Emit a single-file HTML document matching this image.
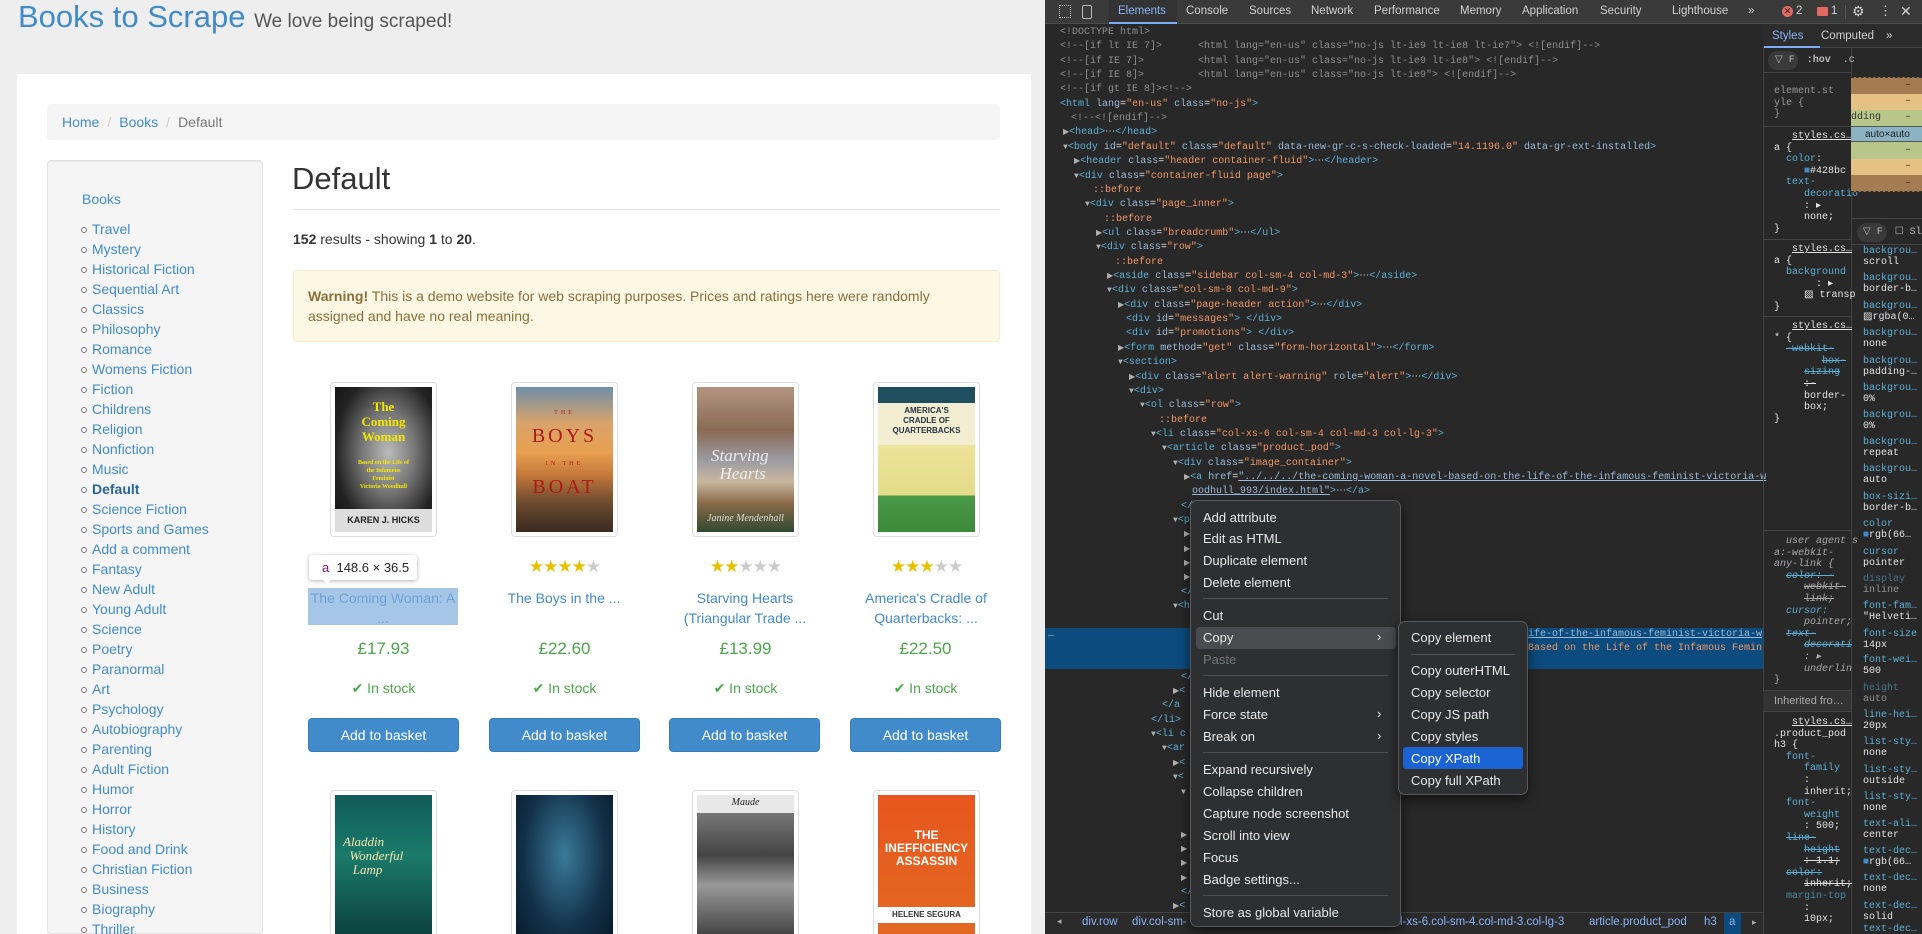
<!DOCTYPE html>
<html style="width:1922px;height:934px;overflow:hidden"><head><meta charset="utf-8">
<style>
*{box-sizing:border-box;margin:0;padding:0}
body{width:1922px;height:934px;overflow:hidden;position:relative;background:#eee;font-family:"Liberation Sans",Arial,sans-serif;font-size:14px;color:#333}
.a{position:absolute;white-space:nowrap}
a{color:#428bca;text-decoration:none}
#page{position:absolute;left:17px;top:74px;width:1014px;height:860px;background:#fff}
.bc{position:absolute;left:47px;top:104px;width:953px;height:36px;background:#f5f5f5;border-radius:4px}
.side{position:absolute;left:47px;top:160px;width:216px;height:774px;background:#f5f5f5;border:1px solid #e3e3e3;border-radius:4px;box-shadow:inset 0 1px 1px rgba(0,0,0,.05)}
.li{position:absolute;left:92px;color:#428bca;line-height:20px}
.li:before{content:"";position:absolute;left:-11px;top:8px;width:4px;height:4px;border:1px solid #777;border-radius:50%}
.imgbox{position:absolute;width:107px;height:155px;border:1px solid #ddd;border-radius:4px;background:#fff;padding:4px}
.cov{width:97px;height:145px;overflow:hidden;position:relative}
.stars{position:absolute;font-size:17px;letter-spacing:-1px;color:#e6c100;width:181px;text-align:center}
.stars i{font-style:normal;color:#ccc}
.ttl{position:absolute;width:150px;text-align:center;color:#428bca;line-height:20px;font-size:14px}
.price{position:absolute;width:151px;text-align:center;color:#4ca64c;font-size:17px}
.stock{position:absolute;width:151px;text-align:center;color:#4ca64c}
.btn{position:absolute;width:151px;height:34px;background:#428bca;border:1px solid #357ebd;border-radius:4px;color:#fff;text-align:center;line-height:32px}
#dt{position:absolute;left:1045px;top:0;width:877px;height:934px;background:#282828;font-family:"Liberation Sans",Arial,sans-serif;color:#e3e3e3;overflow:hidden}
.tabs{position:absolute;left:0;top:0;width:877px;height:24px;background:#3a3a3a;border-bottom:1px solid #4a4a4a}
.tab{position:absolute;top:5px;font-size:11.5px;color:#d0d0d0}
.dl{position:absolute;font-family:"Liberation Mono",monospace;font-size:10px;color:#e3e3e3;white-space:pre;line-height:12px}
.t{color:#5db0d7}.n{color:#9bbbdc}.v{color:#f29766}.c{color:#8f8f8f}.o{color:#f29766}
.tri{color:#b0b0b0;font-size:8px}
.menu{position:absolute;background:#2e2f31;border:1px solid #5a5a5a;border-radius:7px;box-shadow:0 4px 12px rgba(0,0,0,.6)}
.mi{position:absolute;left:12px;font-size:13px;color:#e8e8e8;line-height:18px}
.sep{position:absolute;left:12px;right:12px;height:1px;background:#4f4f4f}
.sty{position:absolute;font-family:"Liberation Mono",monospace;font-size:10px;color:#e3e3e3;white-space:pre;line-height:11.6px}
.pn{color:#5db0d7}
.cp{position:absolute;left:1863px;font-family:"Liberation Mono",monospace;font-size:10px;line-height:11px;white-space:pre;color:#e3e3e3}
</style></head><body>

<div class="a" style="left:18px;top:-1px;font-size:31px;color:#428bca;">Books to Scrape <span style="font-size:19px;color:#555">We love being scraped!</span></div>
<div id="page"></div>
<div class="bc"></div>
<div class="a" style="left:62px;top:114px;"><a>Home</a><span style="color:#ccc;padding:0 8px">/</span><a>Books</a><span style="color:#ccc;padding:0 8px">/</span><span style="color:#777">Default</span></div>

<div class="side"></div>
<div class="a" style="left:82px;top:191px;color:#428bca">Books</div>
<div class="li" style="top:219px">Travel</div>
<div class="li" style="top:239px">Mystery</div>
<div class="li" style="top:259px">Historical Fiction</div>
<div class="li" style="top:279px">Sequential Art</div>
<div class="li" style="top:299px">Classics</div>
<div class="li" style="top:319px">Philosophy</div>
<div class="li" style="top:339px">Romance</div>
<div class="li" style="top:359px">Womens Fiction</div>
<div class="li" style="top:379px">Fiction</div>
<div class="li" style="top:399px">Childrens</div>
<div class="li" style="top:419px">Religion</div>
<div class="li" style="top:439px">Nonfiction</div>
<div class="li" style="top:459px">Music</div>
<div class="li" style="top:479px;font-weight:bold;color:#2a6496">Default</div>
<div class="li" style="top:499px">Science Fiction</div>
<div class="li" style="top:519px">Sports and Games</div>
<div class="li" style="top:539px">Add a comment</div>
<div class="li" style="top:559px">Fantasy</div>
<div class="li" style="top:579px">New Adult</div>
<div class="li" style="top:599px">Young Adult</div>
<div class="li" style="top:619px">Science</div>
<div class="li" style="top:639px">Poetry</div>
<div class="li" style="top:659px">Paranormal</div>
<div class="li" style="top:679px">Art</div>
<div class="li" style="top:699px">Psychology</div>
<div class="li" style="top:719px">Autobiography</div>
<div class="li" style="top:739px">Parenting</div>
<div class="li" style="top:759px">Adult Fiction</div>
<div class="li" style="top:779px">Humor</div>
<div class="li" style="top:799px">Horror</div>
<div class="li" style="top:819px">History</div>
<div class="li" style="top:839px">Food and Drink</div>
<div class="li" style="top:859px">Christian Fiction</div>
<div class="li" style="top:879px">Business</div>
<div class="li" style="top:899px">Biography</div>
<div class="li" style="top:919px">Thriller</div>

<div class="a" style="left:292px;top:161px;font-size:31px;color:#333">Default</div>
<div class="a" style="left:293px;top:209px;width:707px;height:1px;background:#e5e5e5"></div>
<div class="a" style="left:293px;top:231px"><b>152</b> results - showing <b>1</b> to <b>20</b>.</div>
<div class="a" style="left:293px;top:270px;width:707px;height:72px;background:#fcf8e3;border:1px solid #faebcc;border-radius:4px"></div>
<div class="a" style="left:308px;top:286px;color:#8a6d3b;line-height:20px;white-space:normal;width:680px"><b>Warning!</b> This is a demo website for web scraping purposes. Prices and ratings here were randomly assigned and have no real meaning.</div>

<div class="imgbox" style="left:330px;top:382px"><div class="cov" style="background:radial-gradient(ellipse at 55% 45%,#bbb 0%,#777 35%,#222 70%,#111 100%)">
<div class="a" style="left:0;width:97px;top:12px;text-align:center;color:#f2e600;font:bold 13px 'Liberation Serif',serif;line-height:15px">The<br>Coming<br>Woman</div>
<div class="a" style="left:0;width:97px;top:72px;text-align:center;color:#f2e600;font:bold 6px 'Liberation Serif',serif;line-height:8px">Based on the Life of<br>the Infamous<br>Feminist<br>Victoria Woodhull</div>
<div class="a" style="left:0;width:97px;top:122px;height:23px;background:#ddd;text-align:center;font:bold 9px 'Liberation Sans';line-height:23px;color:#222">KAREN J. HICKS</div></div></div>
<div class="imgbox" style="left:511px;top:382px"><div class="cov" style="background:linear-gradient(#6e8fa8 0%,#d9a36a 25%,#e8a050 45%,#c77a3a 60%,#6b4a2e 80%,#3a2a20 100%)">
<div class="a" style="left:0;width:97px;top:10px;text-align:center;color:#b01818;font:20px 'Liberation Serif',serif;letter-spacing:3px;line-height:23px"><span style="font-size:6px">THE</span><br>BOYS<br><span style="font-size:6px">IN THE</span><br>BOAT</div></div></div>
<div class="imgbox" style="left:692px;top:382px"><div class="cov" style="background:linear-gradient(#b29480 0%,#8a6a55 30%,#9a9aa0 50%,#c9b7a0 65%,#8b6a4a 80%,#2f4a2f 100%)">
<div class="a" style="left:14px;top:60px;color:#eee;font:italic 17px 'Liberation Serif',serif;line-height:18px">Starving<br>&nbsp;&nbsp;Hearts</div>
<div class="a" style="left:10px;top:126px;color:#ddd;font:italic 10px 'Liberation Serif',serif">Janine Mendenhall</div></div></div>
<div class="imgbox" style="left:873px;top:382px"><div class="cov" style="background:linear-gradient(#1f4e5e 0%,#1f4e5e 11%,#f3eed2 11%,#f3eed2 40%,#ede39a 40%,#e3dc88 75%,#4a9a4a 75%,#3a8a3a 100%)">
<div class="a" style="left:0;width:97px;top:19px;text-align:center;color:#234;font:bold 8px 'Liberation Sans';line-height:10px">AMERICA'S<br>CRADLE OF<br>QUARTERBACKS</div></div></div>

<div class="stars" style="left:292px;top:557px">★<i>★★★★</i></div>
<div class="stars" style="left:474px;top:557px">★★★★<i>★</i></div>
<div class="stars" style="left:655px;top:557px">★★<i>★★★</i></div>
<div class="stars" style="left:836px;top:557px">★★★<i>★★</i></div>

<div class="a" style="left:308px;top:588px;width:150px;height:37px;background:#a6c6e8"></div>
<div class="ttl" style="left:308px;top:588px;color:#6fa0d4">The Coming Woman: A<br>...</div>
<div class="ttl" style="left:489px;top:588px">The Boys in the ...</div>
<div class="ttl" style="left:670px;top:588px">Starving Hearts<br>(Triangular Trade ...</div>
<div class="ttl" style="left:851px;top:588px">America's Cradle of<br>Quarterbacks: ...</div>

<div class="a" style="left:309px;top:555px;width:108px;height:25px;background:#fff;border-radius:3px;box-shadow:0 1px 4px rgba(0,0,0,.3)"></div>
<div class="a" style="left:321px;top:578px;width:0;height:0;border-left:6px solid transparent;border-right:6px solid transparent;border-top:6px solid #fff"></div>
<div class="a" style="left:322px;top:560px;font-size:13px"><span style="color:#881280">a</span>&nbsp;&nbsp;<span style="color:#222">148.6 × 36.5</span></div>

<div class="price" style="left:308px;top:639px">£17.93</div>
<div class="price" style="left:489px;top:639px">£22.60</div>
<div class="price" style="left:670px;top:639px">£13.99</div>
<div class="price" style="left:850px;top:639px">£22.50</div>
<div class="stock" style="left:308px;top:680px">✔ In stock</div>
<div class="stock" style="left:489px;top:680px">✔ In stock</div>
<div class="stock" style="left:670px;top:680px">✔ In stock</div>
<div class="stock" style="left:850px;top:680px">✔ In stock</div>
<div class="btn" style="left:308px;top:718px">Add to basket</div>
<div class="btn" style="left:489px;top:718px">Add to basket</div>
<div class="btn" style="left:669px;top:718px">Add to basket</div>
<div class="btn" style="left:850px;top:718px">Add to basket</div>

<div class="imgbox" style="left:330px;top:790px;height:150px"><div class="cov" style="height:150px;background:linear-gradient(#0f5a5a,#1b7a6a 40%,#0a3a3a)">
<div class="a" style="left:8px;top:40px;color:#f3e6b0;font:italic 13px 'Liberation Serif',serif;line-height:14px">Aladdin<br>&nbsp;&nbsp;Wonderful<br>&nbsp;&nbsp;&nbsp;Lamp</div></div></div>
<div class="imgbox" style="left:511px;top:790px;height:150px"><div class="cov" style="height:150px;background:radial-gradient(ellipse at 50% 40%,#3a7a9a,#123048 60%,#071828)"></div></div>
<div class="imgbox" style="left:692px;top:790px;height:150px"><div class="cov" style="height:150px;background:linear-gradient(#e8e8e8 0%,#e8e8e8 12%,#777 12%,#444 40%,#999 60%,#333 100%)">
<div class="a" style="left:0;width:97px;top:2px;text-align:center;font:italic 10px 'Liberation Serif',serif;color:#222">Maude</div></div></div>
<div class="imgbox" style="left:873px;top:790px;height:150px"><div class="cov" style="height:150px;background:linear-gradient(#e8561e,#e26a22)">
<div class="a" style="left:0;width:97px;top:34px;text-align:center;color:#fff;font:bold 12px 'Liberation Sans';line-height:13px">THE<br>INEFFICIENCY<br>ASSASSIN</div>
<div class="a" style="left:0;width:97px;top:112px;height:16px;background:#fff;text-align:center;color:#333;font:bold 8px 'Liberation Sans';line-height:16px">HELENE SEGURA</div></div></div>

<div id="dt">
<div class="tabs"></div>
<div class="a" style="left:14px;top:5px;width:12px;height:13px;border:1px dotted #bbb"></div>
<div class="a" style="left:37px;top:5px;width:10px;height:14px;border:1.5px solid #bbb;border-radius:2px"></div>
<div class="a" style="left:64px;top:0;width:68px;height:24px;background:#333"></div>
<div class="tab" style="left:73px;color:#8ab4f8">Elements</div>
<div class="a" style="left:64px;top:22px;width:68px;height:2px;background:#7cacf8"></div>
<div class="tab" style="left:141px">Console</div>
<div class="tab" style="left:204px">Sources</div>
<div class="tab" style="left:266px">Network</div>
<div class="tab" style="left:329px">Performance</div>
<div class="tab" style="left:415px">Memory</div>
<div class="tab" style="left:477px">Application</div>
<div class="tab" style="left:555px">Security</div>
<div class="tab" style="left:627px">Lighthouse</div>
<div class="tab" style="left:703px">»</div>
<div class="a" style="left:737px;top:6px;width:11px;height:11px;border-radius:50%;background:#e46962;color:#222;font-size:9px;text-align:center;line-height:11px">✕</div>
<div class="tab" style="left:751px">2</div>
<div class="a" style="left:772px;top:7px;width:11px;height:9px;background:#e46962;border-radius:1px"></div>
<div class="tab" style="left:786px">1</div>
<div class="a" style="left:800px;top:5px;width:1px;height:14px;background:#555"></div>
<div class="tab" style="left:807px;font-size:14px;top:3px">⚙</div>
<div class="tab" style="left:834px;font-size:13px;top:3px">⋮</div>
<div class="tab" style="left:855px;font-size:14px;top:3px">✕</div>

<div class="dl" style="left:15px;top:27px"><span class="c">&lt;!DOCTYPE html&gt;</span></div>
<div class="dl" style="left:15px;top:41px"><span class="c">&lt;!--[if lt IE 7]&gt;      &lt;html lang="en-us" class="no-js lt-ie9 lt-ie8 lt-ie7"&gt; &lt;![endif]--&gt;</span></div>
<div class="dl" style="left:15px;top:56px"><span class="c">&lt;!--[if IE 7]&gt;         &lt;html lang="en-us" class="no-js lt-ie9 lt-ie8"&gt; &lt;![endif]--&gt;</span></div>
<div class="dl" style="left:15px;top:70px"><span class="c">&lt;!--[if IE 8]&gt;         &lt;html lang="en-us" class="no-js lt-ie9"&gt; &lt;![endif]--&gt;</span></div>
<div class="dl" style="left:15px;top:84px"><span class="c">&lt;!--[if gt IE 8]&gt;&lt;!--&gt;</span></div>
<div class="dl" style="left:15px;top:99px"><span class="t">&lt;html</span> <span class="n">lang</span>=<span class="v">"en-us"</span> <span class="n">class</span>=<span class="v">"no-js"</span><span class="t">&gt;</span></div>
<div class="dl" style="left:26px;top:113px"><span class="c">&lt;!--&lt;![endif]--&gt;</span></div>
<div class="dl" style="left:18px;top:127px"><span class="tri">▶</span><span class="t">&lt;head&gt;</span>⋯<span class="t">&lt;/head&gt;</span></div>
<div class="dl" style="left:18px;top:142px"><span class="tri">▼</span><span class="t">&lt;body</span> <span class="n">id</span>=<span class="v">"default"</span> <span class="n">class</span>=<span class="v">"default"</span> <span class="n">data-new-gr-c-s-check-loaded</span>=<span class="v">"14.1196.0"</span> <span class="n">data-gr-ext-installed</span><span class="t">&gt;</span></div>
<div class="dl" style="left:29px;top:156px"><span class="tri">▶</span><span class="t">&lt;header</span> <span class="n">class</span>=<span class="v">"header container-fluid"</span><span class="t">&gt;</span>⋯<span class="t">&lt;/header&gt;</span></div>
<div class="dl" style="left:29px;top:171px"><span class="tri">▼</span><span class="t">&lt;div</span> <span class="n">class</span>=<span class="v">"container-fluid page"</span><span class="t">&gt;</span></div>
<div class="dl" style="left:48px;top:185px"><span class="o">::before</span></div>
<div class="dl" style="left:40px;top:199px"><span class="tri">▼</span><span class="t">&lt;div</span> <span class="n">class</span>=<span class="v">"page_inner"</span><span class="t">&gt;</span></div>
<div class="dl" style="left:59px;top:214px"><span class="o">::before</span></div>
<div class="dl" style="left:51px;top:228px"><span class="tri">▶</span><span class="t">&lt;ul</span> <span class="n">class</span>=<span class="v">"breadcrumb"</span><span class="t">&gt;</span>⋯<span class="t">&lt;/ul&gt;</span></div>
<div class="dl" style="left:51px;top:242px"><span class="tri">▼</span><span class="t">&lt;div</span> <span class="n">class</span>=<span class="v">"row"</span><span class="t">&gt;</span></div>
<div class="dl" style="left:70px;top:257px"><span class="o">::before</span></div>
<div class="dl" style="left:62px;top:271px"><span class="tri">▶</span><span class="t">&lt;aside</span> <span class="n">class</span>=<span class="v">"sidebar col-sm-4 col-md-3"</span><span class="t">&gt;</span>⋯<span class="t">&lt;/aside&gt;</span></div>
<div class="dl" style="left:62px;top:285px"><span class="tri">▼</span><span class="t">&lt;div</span> <span class="n">class</span>=<span class="v">"col-sm-8 col-md-9"</span><span class="t">&gt;</span></div>
<div class="dl" style="left:73px;top:300px"><span class="tri">▶</span><span class="t">&lt;div</span> <span class="n">class</span>=<span class="v">"page-header action"</span><span class="t">&gt;</span>⋯<span class="t">&lt;/div&gt;</span></div>
<div class="dl" style="left:81px;top:314px"><span class="t">&lt;div</span> <span class="n">id</span>=<span class="v">"messages"</span><span class="t">&gt;</span> <span class="t">&lt;/div&gt;</span></div>
<div class="dl" style="left:81px;top:328px"><span class="t">&lt;div</span> <span class="n">id</span>=<span class="v">"promotions"</span><span class="t">&gt;</span> <span class="t">&lt;/div&gt;</span></div>
<div class="dl" style="left:73px;top:343px"><span class="tri">▶</span><span class="t">&lt;form</span> <span class="n">method</span>=<span class="v">"get"</span> <span class="n">class</span>=<span class="v">"form-horizontal"</span><span class="t">&gt;</span>⋯<span class="t">&lt;/form&gt;</span></div>
<div class="dl" style="left:73px;top:357px"><span class="tri">▼</span><span class="t">&lt;section&gt;</span></div>
<div class="dl" style="left:84px;top:372px"><span class="tri">▶</span><span class="t">&lt;div</span> <span class="n">class</span>=<span class="v">"alert alert-warning"</span> <span class="n">role</span>=<span class="v">"alert"</span><span class="t">&gt;</span>⋯<span class="t">&lt;/div&gt;</span></div>
<div class="dl" style="left:84px;top:386px"><span class="tri">▼</span><span class="t">&lt;div&gt;</span></div>
<div class="dl" style="left:95px;top:400px"><span class="tri">▼</span><span class="t">&lt;ol</span> <span class="n">class</span>=<span class="v">"row"</span><span class="t">&gt;</span></div>
<div class="dl" style="left:114px;top:415px"><span class="o">::before</span></div>
<div class="dl" style="left:106px;top:429px"><span class="tri">▼</span><span class="t">&lt;li</span> <span class="n">class</span>=<span class="v">"col-xs-6 col-sm-4 col-md-3 col-lg-3"</span><span class="t">&gt;</span></div>
<div class="dl" style="left:117px;top:443px"><span class="tri">▼</span><span class="t">&lt;article</span> <span class="n">class</span>=<span class="v">"product_pod"</span><span class="t">&gt;</span></div>
<div class="dl" style="left:128px;top:458px"><span class="tri">▼</span><span class="t">&lt;div</span> <span class="n">class</span>=<span class="v">"image_container"</span><span class="t">&gt;</span></div>
<div class="dl" style="left:139px;top:472px"><span class="tri">▶</span><span class="t">&lt;a</span> <span class="n">href</span>=<span class="v" style="text-decoration:underline;color:#9bbbdc">"../../../the-coming-woman-a-novel-based-on-the-life-of-the-infamous-feminist-victoria-w</span></div>
<div class="dl" style="left:147px;top:486px"><span class="v" style="text-decoration:underline;color:#9bbbdc">oodhull_993/index.html"</span><span class="t">&gt;</span>⋯<span class="t">&lt;/a&gt;</span></div>
<div class="dl" style="left:136px;top:501px"><span class="t">&lt;/</span></div>
<div class="dl" style="left:128px;top:515px"><span class="tri">▼</span><span class="t">&lt;p</span></div>
<div class="dl" style="left:139px;top:529px"><span class="tri">▶</span></div>
<div class="dl" style="left:139px;top:544px"><span class="tri">▶</span></div>
<div class="dl" style="left:139px;top:558px"><span class="tri">▶</span></div>
<div class="dl" style="left:139px;top:572px"><span class="tri">▶</span></div>
<div class="dl" style="left:136px;top:587px"><span class="t">&lt;/</span></div>
<div class="dl" style="left:128px;top:601px"><span class="tri">▼</span><span class="t">&lt;h</span></div>
<div class="a" style="left:0;top:628px;width:718px;height:41px;background:#0b4b7d"></div>
<div class="dl" style="left:3px;top:629px;color:#ccc">…</div>
<div class="dl" style="left:483px;top:629px"><span style="text-decoration:underline;color:#9bbbdc">ife-of-the-infamous-feminist-victoria-w</span></div>
<div class="dl" style="left:483px;top:643px"><span class="o">Based on the Life of the Infamous Femin</span></div>
<div class="dl" style="left:136px;top:672px"><span class="t">&lt;/</span></div>
<div class="dl" style="left:128px;top:686px"><span class="tri">▶</span><span class="t">&lt;</span></div>
<div class="dl" style="left:117px;top:700px"><span class="t">&lt;/a</span></div>
<div class="dl" style="left:106px;top:715px"><span class="t">&lt;/li&gt;</span></div>
<div class="dl" style="left:106px;top:729px"><span class="tri">▼</span><span class="t">&lt;li c</span></div>
<div class="dl" style="left:117px;top:743px"><span class="tri">▼</span><span class="t">&lt;ar</span></div>
<div class="dl" style="left:128px;top:758px"><span class="tri">▶</span><span class="t">&lt;</span></div>
<div class="dl" style="left:128px;top:772px"><span class="tri">▼</span><span class="t">&lt;</span></div>
<div class="dl" style="left:136px;top:787px"><span class="tri">▼</span></div>
<div class="dl" style="left:136px;top:830px"><span class="tri">▶</span></div>
<div class="dl" style="left:136px;top:844px"><span class="tri">▶</span></div>
<div class="dl" style="left:136px;top:858px"><span class="tri">▶</span></div>
<div class="dl" style="left:136px;top:873px"><span class="tri">▶</span></div>
<div class="dl" style="left:136px;top:887px"><span class="t">&lt;/</span></div>
<div class="dl" style="left:128px;top:901px"><span class="tri">▶</span><span class="t">&lt;</span></div>

<div class="a" style="left:0;top:912px;width:718px;height:22px;background:#2b2b2b;border-top:1px solid #444"></div>
<div class="a" style="left:12px;top:916px;font-size:9px;color:#aaa">◂</div>
<div class="a" style="left:37px;top:916px;font-size:11.5px;color:#8ab4f8">div.row</div>
<div class="a" style="left:87px;top:916px;font-size:11.5px;color:#8ab4f8">div.col-sm-</div>
<div class="a" style="left:355px;top:916px;font-size:11.5px;color:#8ab4f8">l-xs-6.col-sm-4.col-md-3.col-lg-3</div>
<div class="a" style="left:544px;top:916px;font-size:11.5px;color:#8ab4f8">article.product_pod</div>
<div class="a" style="left:659px;top:916px;font-size:11.5px;color:#8ab4f8">h3</div>
<div class="a" style="left:679px;top:913px;width:17px;height:21px;background:#0b4b7d"></div>
<div class="a" style="left:684px;top:916px;font-size:11.5px;color:#8ab4f8">a</div>
<div class="a" style="left:707px;top:917px;font-size:9px;color:#aaa">▸</div>

<div class="a" style="left:718px;top:24px;width:1px;height:910px;background:#444"></div>
<div class="a" style="left:806px;top:48px;width:1px;height:886px;background:#444"></div>
<div class="a" style="left:718px;top:24px;width:159px;height:24px;background:#2c2c2c;border-bottom:1px solid #444"></div>
<div class="tab" style="left:727px;top:30px;color:#8ab4f8">Styles</div>
<div class="a" style="left:719px;top:46px;width:56px;height:2px;background:#7cacf8"></div>
<div class="tab" style="left:776px;top:30px">Computed</div>
<div class="tab" style="left:841px;top:30px">»</div>
<div class="a" style="left:723px;top:51px;width:30px;height:19px;border-radius:10px;background:#3a3a3a"></div>
<div class="sty" style="left:730px;top:55px;color:#bbb">▽ F  <b>:hov</b>  .c</div>
<div class="a" style="left:718px;top:72px;width:88px;height:1px;background:#444"></div>
<div class="sty" style="left:729px;top:86px;color:#999">element.st
yle {
}</div>
<div class="a" style="left:718px;top:126px;width:88px;height:1px;background:#444"></div>
<div class="sty" style="left:729px;top:131px">   <u>styles.cs…</u>
a {
  <span class="pn">color</span>:
     <span style="color:#428bca">■</span>#428bc
  <span class="pn">text-</span>
     <span class="pn">decoratio</span>
     : ▸
     none;
}</div>
<div class="a" style="left:718px;top:239px;width:88px;height:1px;background:#444"></div>
<div class="sty" style="left:729px;top:244px">   <u>styles.cs…</u>
a {
  <span class="pn">background</span>
       : ▸
     ▨ transp
}</div>
<div class="a" style="left:718px;top:316px;width:88px;height:1px;background:#444"></div>
<div class="sty" style="left:729px;top:321px">   <u>styles.cs…</u>
* {
  <s class="pn">-webkit-</s>
        <s class="pn">box-</s>
     <s class="pn">sizing</s>
     <s>:-</s>
     border-
     box;
}</div>
<div class="a" style="left:718px;top:530px;width:88px;height:1px;background:#444"></div>
<div class="sty" style="left:729px;top:536px;color:#aaa"><i>  user agent s</i>
<i>a:-webkit-</i>
<i>any-link {</i>
  <i><s class="pn">color: -</s></i>
     <i><s>webkit-</s></i>
     <i><s>link;</s></i>
  <i class="pn">cursor:</i>
     <i>pointer;</i>
  <i><s class="pn">text-</s></i>
     <i><s class="pn">decorati</s></i>
     <i>: ▸</i>
     <i>underlin</i>
}</div>
<div class="a" style="left:718px;top:690px;width:88px;height:22px;background:#333;border-top:1px solid #444;border-bottom:1px solid #444"></div>
<div class="sty" style="left:729px;top:696px;color:#aaa;font-family:'Liberation Sans';font-size:11px">Inherited fro…</div>
<div class="sty" style="left:729px;top:717px">   <u>styles.cs…</u>
.product_pod
h3 {
  <span class="pn">font-</span>
     <span class="pn">family</span>
     :
     inherit;
  <span class="pn">font-</span>
     <span class="pn">weight</span>
     : 500;
  <s class="pn">line-</s>
     <s class="pn">height</s>
     <s>: 1.1;</s>
  <s class="pn">color:</s>
     <s>inherit;</s>
  <span class="pn" style="opacity:.7">margin-top</span>
     :
     10px;</div>

<div class="a" style="left:806px;top:77px;width:71px;height:17px;background:#a57c52;border-top:1px dashed #333"></div>
<div class="a" style="left:806px;top:94px;width:71px;height:16px;background:#e5c284"></div>
<div class="a" style="left:806px;top:110px;width:71px;height:16px;background:#b8c68a"></div>
<div class="a" style="left:806px;top:126px;width:71px;height:16px;background:#8cb3c3;border-top:1px solid #555;border-bottom:1px solid #555"></div>
<div class="a" style="left:806px;top:142px;width:71px;height:17px;background:#b8c68a"></div>
<div class="a" style="left:806px;top:159px;width:71px;height:16px;background:#e5c284"></div>
<div class="a" style="left:806px;top:175px;width:71px;height:17px;background:#a57c52;border-bottom:1px dashed #333"></div>
<div class="sty" style="left:860px;top:80px;color:#333">–</div>
<div class="sty" style="left:860px;top:96px;color:#333">–</div>
<div class="sty" style="left:806px;top:112px;color:#333">dding    –</div>
<div class="sty" style="left:820px;top:129px;color:#222;font-family:'Liberation Sans'">auto×auto</div>
<div class="sty" style="left:860px;top:145px;color:#333">–</div>
<div class="sty" style="left:860px;top:161px;color:#333">–</div>
<div class="sty" style="left:860px;top:178px;color:#333">–</div>
<div class="a" style="left:806px;top:218px;width:71px;height:1px;background:#444"></div>
<div class="a" style="left:812px;top:223px;width:30px;height:19px;border-radius:10px;background:#3a3a3a"></div>
<div class="sty" style="left:818px;top:227px;color:#bbb">▽ F  ☐ Sl</div>
<div class="a" style="left:806px;top:244px;width:71px;height:1px;background:#444"></div>
</div>

<div class="cp" style="top:246px"><span class="pn">backgrou…</span>
scroll</div>
<div class="cp" style="top:273px"><span class="pn">backgrou…</span>
border-b…</div>
<div class="cp" style="top:301px"><span class="pn">backgrou…</span>
▨rgba(0…</div>
<div class="cp" style="top:328px"><span class="pn">backgrou…</span>
none</div>
<div class="cp" style="top:356px"><span class="pn">backgrou…</span>
padding-…</div>
<div class="cp" style="top:383px"><span class="pn">backgrou…</span>
0%</div>
<div class="cp" style="top:410px"><span class="pn">backgrou…</span>
0%</div>
<div class="cp" style="top:437px"><span class="pn">backgrou…</span>
repeat</div>
<div class="cp" style="top:464px"><span class="pn">backgrou…</span>
auto</div>
<div class="cp" style="top:492px"><span class="pn">box-sizi…</span>
border-b…</div>
<div class="cp" style="top:519px"><span class="pn">color</span>
<span style="color:#428bca">■</span>rgb(66…</div>
<div class="cp" style="top:547px"><span class="pn">cursor</span>
pointer</div>
<div class="cp" style="top:574px;opacity:.55"><span class="pn">display</span>
inline</div>
<div class="cp" style="top:601px"><span class="pn">font-fam…</span>
"Helveti…</div>
<div class="cp" style="top:629px"><span class="pn">font-size</span>
14px</div>
<div class="cp" style="top:655px"><span class="pn">font-wei…</span>
500</div>
<div class="cp" style="top:683px;opacity:.55"><span class="pn">height</span>
auto</div>
<div class="cp" style="top:710px"><span class="pn">line-hei…</span>
20px</div>
<div class="cp" style="top:737px"><span class="pn">list-sty…</span>
none</div>
<div class="cp" style="top:765px"><span class="pn">list-sty…</span>
outside</div>
<div class="cp" style="top:792px"><span class="pn">list-sty…</span>
none</div>
<div class="cp" style="top:819px"><span class="pn">text-ali…</span>
center</div>
<div class="cp" style="top:846px"><span class="pn">text-dec…</span>
<span style="color:#428bca">■</span>rgb(66…</div>
<div class="cp" style="top:873px"><span class="pn">text-dec…</span>
none</div>
<div class="cp" style="top:901px"><span class="pn">text-dec…</span>
solid</div>
<div class="cp" style="top:924px"><span class="pn">text-dec…</span></div>

<div class="menu" style="left:1190px;top:500px;width:211px;height:427px">
<div class="a" style="left:5px;top:126px;width:200px;height:22px;background:#4a4c50;border-radius:4px"></div>
<div class="mi" style="top:8px">Add attribute</div>
<div class="mi" style="top:29px">Edit as HTML</div>
<div class="mi" style="top:51px">Duplicate element</div>
<div class="mi" style="top:73px">Delete element</div>
<div class="sep" style="top:97px"></div>
<div class="mi" style="top:106px">Cut</div>
<div class="mi" style="top:128px">Copy</div>
<div class="mi" style="top:127px;left:186px">›</div>
<div class="mi" style="top:150px;color:#777">Paste</div>
<div class="sep" style="top:174px"></div>
<div class="mi" style="top:183px">Hide element</div>
<div class="mi" style="top:205px">Force state</div>
<div class="mi" style="top:204px;left:186px">›</div>
<div class="mi" style="top:227px">Break on</div>
<div class="mi" style="top:226px;left:186px">›</div>
<div class="sep" style="top:251px"></div>
<div class="mi" style="top:260px">Expand recursively</div>
<div class="mi" style="top:282px">Collapse children</div>
<div class="mi" style="top:304px">Capture node screenshot</div>
<div class="mi" style="top:326px">Scroll into view</div>
<div class="mi" style="top:348px">Focus</div>
<div class="mi" style="top:370px">Badge settings...</div>
<div class="sep" style="top:394px"></div>
<div class="mi" style="top:403px">Store as global variable</div>
</div>
<div class="menu" style="left:1398px;top:621px;width:130px;height:174px">
<div class="a" style="left:4px;top:125px;width:120px;height:22px;background:#1b62d3;border-radius:3px"></div>
<div class="mi" style="top:7px">Copy element</div>
<div class="sep" style="top:32px"></div>
<div class="mi" style="top:40px">Copy outerHTML</div>
<div class="mi" style="top:62px">Copy selector</div>
<div class="mi" style="top:84px">Copy JS path</div>
<div class="mi" style="top:106px">Copy styles</div>
<div class="mi" style="top:128px;color:#fff">Copy XPath</div>
<div class="mi" style="top:150px">Copy full XPath</div>
</div>
</body></html>
